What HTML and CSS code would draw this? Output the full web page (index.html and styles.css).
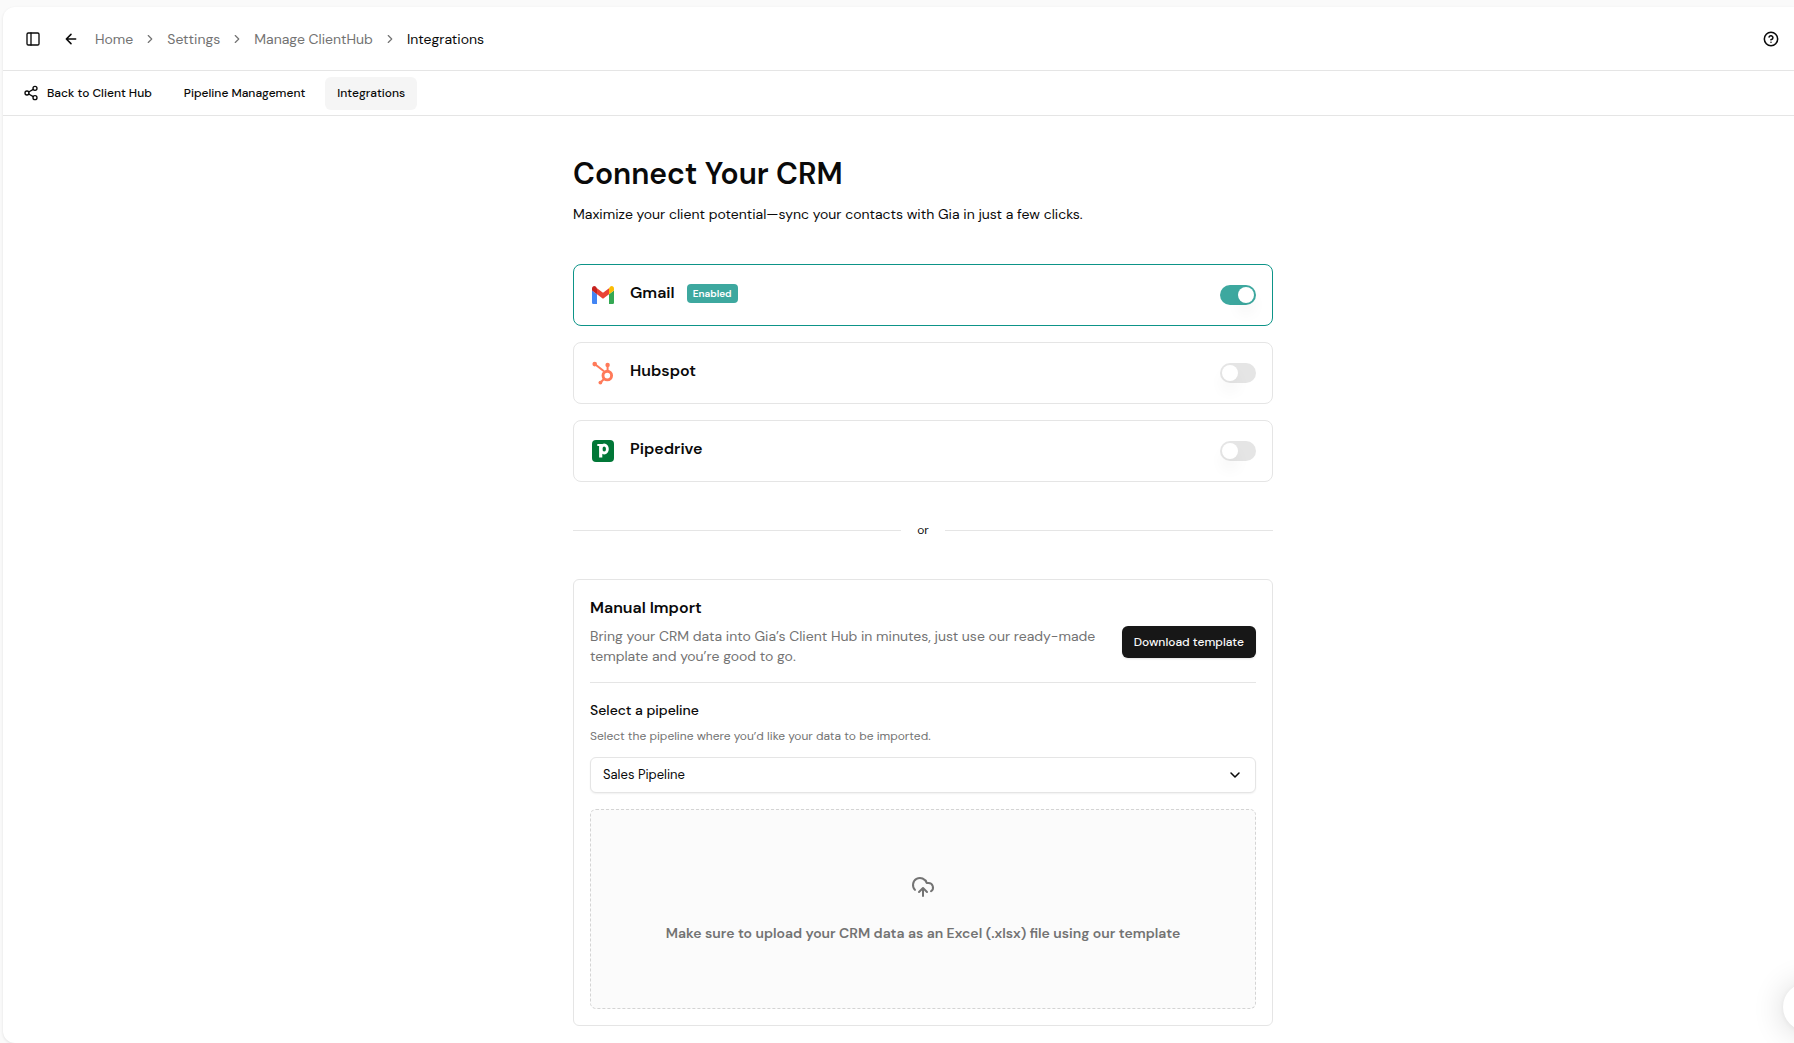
FILE: index.html
```html
<!DOCTYPE html>
<html lang="en">
<head>
<meta charset="utf-8">
<meta name="viewport" content="width=device-width, initial-scale=1">
<title>Integrations</title>
<link rel="stylesheet" href="styles.css">
</head>
<body>
<div class="panel">
  <header class="topbar">
    <button class="icon-btn" type="button" aria-label="Toggle sidebar">
      <svg class="icon" viewBox="0 0 24 24"><rect x="3" y="3" width="18" height="18" rx="2"/><path d="M9 3v18"/></svg>
    </button>
    <button class="icon-btn back" type="button" aria-label="Back">
      <svg class="icon bold" viewBox="0 0 24 24"><path d="m12 19-7-7 7-7M19 12H5"/></svg>
    </button>
    <nav class="crumbs" aria-label="Breadcrumb">
      <a href="#">Home</a>
      <svg class="icon small" viewBox="0 0 24 24"><path d="m9 18 6-6-6-6"/></svg>
      <a href="#">Settings</a>
      <svg class="icon small" viewBox="0 0 24 24"><path d="m9 18 6-6-6-6"/></svg>
      <a href="#">Manage ClientHub</a>
      <svg class="icon small" viewBox="0 0 24 24"><path d="m9 18 6-6-6-6"/></svg>
      <span class="current" aria-current="page">Integrations</span>
    </nav>
    <button class="icon-btn help" type="button" aria-label="Help">
      <svg class="icon bold" viewBox="0 0 24 24"><circle cx="12" cy="12" r="10"/><path d="M9.09 9a3 3 0 0 1 5.83 1c0 2-3 3-3 3M12 17h.01"/></svg>
    </button>
  </header>

  <nav class="tabs" aria-label="Client Hub settings">
    <a class="tab tab-back" href="#">
      <svg class="icon" viewBox="0 0 24 24"><circle cx="18" cy="5" r="3"/><circle cx="6" cy="12" r="3"/><circle cx="18" cy="19" r="3"/><path d="m8.59 13.51 6.83 3.98M15.41 6.51l-6.82 3.98"/></svg>
      Back to Client Hub
    </a>
    <a class="tab" href="#">Pipeline Management</a>
    <a class="tab active" href="#" aria-current="page">Integrations</a>
  </nav>

  <main class="content">
    <h1 class="title">Connect Your CRM</h1>
    <p class="subtitle">Maximize your client potential—sync your contacts with Gia in just a few clicks.</p>

    <section class="providers" aria-label="Providers">
      <div class="provider enabled">
        <svg class="logo" viewBox="0 0 24 24" aria-hidden="true">
          <path fill="#4285f4" d="M2.6 21H6V11.2L1 7.5v11.9C1 20.300 1.700 21 2.600 21z"/>
          <path fill="#34a853" d="M18 21h3.400c.9 0 1.600-.7 1.600-1.600V7.500l-5 3.700z"/>
          <path fill="#fbbc04" d="M18 5.200v6L23 7.500v-2c0-2.100-2.200-3.100-3.700-1.900z"/>
          <path fill="#ea4335" d="M6 11.200v-6l6 4.500 6-4.500v6l-6 4.500z"/>
          <path fill="#c5221f" d="M1 5.500v2l5 3.700v-6L4.700 3.600C3.200 2.400 1 3.400 1 5.500z"/>
        </svg>
        <label class="provider-name" for="gmail">Gmail</label>
        <span class="badge">Enabled</span>
        <input class="switch" id="gmail" type="checkbox" role="switch" checked>
      </div>
      <div class="provider">
        <svg class="logo" viewBox="0 0 24 24" aria-hidden="true">
          <g fill="none" stroke="#ff7a59">
            <circle cx="16.300" cy="14.600" r="4.300" stroke-width="2.900"/>
            <path stroke-width="2" d="M4 3.200 13 10.300M16.600 4v6.500M13.200 17.700 9.500 21.500"/>
          </g>
          <g fill="#ff7a59"><circle cx="3.700" cy="3.100" r="2.300"/><circle cx="16.600" cy="3.900" r="2.200"/><circle cx="9.400" cy="21.600" r="1.900"/></g>
        </svg>
        <label class="provider-name" for="hubspot">Hubspot</label>
        <input class="switch" id="hubspot" type="checkbox" role="switch">
      </div>
      <div class="provider">
        <svg class="logo" viewBox="0 0 24 24" aria-hidden="true">
          <rect x="1" y="1" width="22" height="22" rx="4" fill="#017737"/>
          <g fill="none" stroke="#fff">
            <ellipse cx="13.200" cy="10" rx="3.200" ry="4" stroke-width="2.800"/>
            <path stroke-width="3.200" d="M9.700 5v13.500"/>
            <path stroke-width="2" d="M6.300 6h3"/>
          </g>
        </svg>
        <label class="provider-name" for="pipedrive">Pipedrive</label>
        <input class="switch" id="pipedrive" type="checkbox" role="switch">
      </div>
    </section>

    <div class="or">or</div>

    <section class="import">
      <h2 class="import-title">Manual Import</h2>
      <div class="import-intro">
        <p class="import-text">Bring your CRM data into Gia’s Client Hub in minutes, just use our ready-made template and you’re good to go.</p>
        <button class="download" type="button">Download template</button>
      </div>
      <label class="field-label" for="pipeline">Select a pipeline</label>
      <p class="field-hint" id="pipeline-hint">Select the pipeline where you’d like your data to be imported.</p>
      <div class="select-wrap">
        <select class="select" id="pipeline" aria-describedby="pipeline-hint"><option>Sales Pipeline</option></select>
        <svg class="icon bold chevron" viewBox="0 0 24 24"><path d="m6 9 6 6 6-6"/></svg>
      </div>
      <label class="dropzone">
        <input class="file" type="file" accept=".xlsx">
        <svg class="icon large" viewBox="0 0 24 24"><path d="M12 13v8M4 14.899A7 7 0 1 1 15.710 8h1.790a4.500 4.500 0 0 1 2.500 8.242M8 17l4-4 4 4"/></svg>
        <span>Make sure to upload your CRM data as an Excel (.xlsx) file using our template</span>
      </label>
    </section>
  </main>
</div>
<button class="chat" type="button" aria-label="Open chat"></button>
</body>
</html>
```
FILE: styles.css
```css
* { box-sizing: border-box; }

body {
  margin: 0;
  padding: 7px 0 0 3px;
  min-height: 100vh;
  display: flex;
  overflow-x: hidden;
  background: #fafafa;
  color: #0a0a0a;
  font-family: "DM Sans", Inter, "Liberation Sans", sans-serif;
  font-size: 14px;
  line-height: 20px;
}

h1, h2, p { margin: 0; }
a { color: inherit; text-decoration: none; }
button, select, input { font: inherit; color: inherit; }

.panel {
  flex: 1;
  min-width: 0;
  background: #fff;
  border-radius: 12px 0 0 12px;
  box-shadow: 0 1px 3px rgba(0, 0, 0, 0.1);
}

.icon {
  flex: none;
  width: 16px;
  height: 16px;
  fill: none;
  stroke: currentColor;
  stroke-width: 2;
  stroke-linecap: round;
  stroke-linejoin: round;
}
.icon.bold { stroke-width: 2.3; }
.icon.small { width: 14px; height: 14px; }
.icon.large { width: 24px; height: 24px; }

.icon-btn {
  display: flex;
  padding: 0;
  border: 0;
  background: none;
}

.topbar {
  display: flex;
  align-items: center;
  height: 64px;
  padding: 0 15px 0 22px;
  border-bottom: 1px solid #e5e5e5;
}
.back { margin-left: 22px; }
.help { margin-left: auto; }

.crumbs {
  display: flex;
  align-items: center;
  gap: 10px;
  margin-left: 16px;
  color: #737373;
}
.crumbs .current { color: #0a0a0a; }

.tabs {
  display: flex;
  align-items: center;
  gap: 8px;
  height: 45px;
  padding: 0 8px;
  border-bottom: 1px solid #e5e5e5;
  font-size: 12px;
  font-weight: 500;
}
.tab {
  display: flex;
  align-items: center;
  gap: 8px;
  height: 33px;
  padding: 0 12px;
  border-radius: 6px;
}
.tab.active { background: #f5f5f5; }

.content {
  width: 100%;
  max-width: 749px;
  margin: 0 auto;
  padding: 40px 0 17px 49px;
}

.title {
  font-size: 30px;
  line-height: 36px;
  font-weight: 600;
}
.subtitle { margin-top: 12px; }

.providers {
  display: flex;
  flex-direction: column;
  gap: 16px;
  margin-top: 40px;
}
.provider {
  display: flex;
  align-items: center;
  height: 62px;
  padding: 0 16px;
  border: 1px solid #e5e5e5;
  border-radius: 8px;
}
.provider.enabled { border-color: #0d9488; }
.logo {
  flex: none;
  width: 24px;
  height: 24px;
  margin-left: 1px;
}
.provider-name {
  margin-left: 15px;
  padding-bottom: 4px;
  font-size: 16px;
  font-weight: 600;
}
.badge {
  margin: 0 0 3px 12px;
  padding: 0 6px;
  border-radius: 4px;
  background: #3da89f;
  color: #fff;
  font-size: 10px;
  line-height: 19px;
  font-weight: 600;
}

.switch {
  appearance: none;
  flex: none;
  display: flex;
  align-items: center;
  width: 36px;
  height: 20px;
  margin: 0 0 0 auto;
  padding: 2px;
  border-radius: 10px;
  background: #e5e5e5;
}
.switch::before {
  content: "";
  width: 16px;
  height: 16px;
  border-radius: 50%;
  background: #fff;
  box-shadow: 0 10px 15px rgba(0, 0, 0, 0.05);
}
.switch:checked { background: #3da89f; }
.switch:checked::before { margin-left: auto; }

.or {
  display: flex;
  align-items: center;
  gap: 16px;
  margin: 38px 0 39px;
  font-size: 12px;
}
.or::before, .or::after {
  content: "";
  flex: 1;
  height: 1px;
  background: #e5e5e5;
}

.import {
  padding: 16px;
  border: 1px solid #e5e5e5;
  border-radius: 6px;
}
.import-title {
  font-size: 16px;
  line-height: 24px;
  font-weight: 600;
}
.import-intro {
  display: flex;
  align-items: flex-start;
  gap: 16px;
  margin-top: 6px;
  padding-bottom: 16px;
  border-bottom: 1px solid #e5e5e5;
}
.import-text {
  flex: 1;
  color: #737373;
}
.download {
  flex: none;
  height: 32px;
  padding: 0 12px;
  border: 0;
  border-radius: 6px;
  background: #171717;
  color: #fafafa;
  font-size: 12px;
  font-weight: 500;
  box-shadow: 0 1px 2px rgba(0, 0, 0, 0.1);
}

.field-label {
  display: block;
  margin-top: 17px;
  font-weight: 500;
}
.field-hint {
  margin-top: 6px;
  color: #737373;
  font-size: 12px;
}
.select-wrap {
  display: grid;
  align-items: center;
  margin-top: 11px;
}
.select {
  grid-area: 1 / 1;
  appearance: none;
  width: 100%;
  height: 36px;
  padding: 0 12px;
  border: 1px solid #e5e5e5;
  border-radius: 6px;
  background: #fff;
  font-size: 13px;
  box-shadow: 0 1px 2px rgba(0, 0, 0, 0.06);
}
.chevron {
  grid-area: 1 / 1;
  justify-self: end;
  margin-right: 13px;
  pointer-events: none;
}

.dropzone {
  display: flex;
  flex-direction: column;
  align-items: center;
  justify-content: center;
  gap: 24px;
  height: 200px;
  margin-top: 16px;
  border: 1px dashed #d4d4d4;
  border-radius: 6px;
  background: #fbfbfb;
  color: #737373;
  font-weight: 600;
}
.file {
  position: absolute;
  width: 1px;
  height: 1px;
  opacity: 0;
}

.chat {
  position: fixed;
  right: -37px;
  bottom: 12px;
  width: 48px;
  height: 48px;
  padding: 0;
  border: 0;
  border-radius: 50%;
  background: #fff;
  box-shadow: 0 1px 6px rgba(0, 0, 0, 0.06), 0 2px 32px rgba(0, 0, 0, 0.16);
}
```
